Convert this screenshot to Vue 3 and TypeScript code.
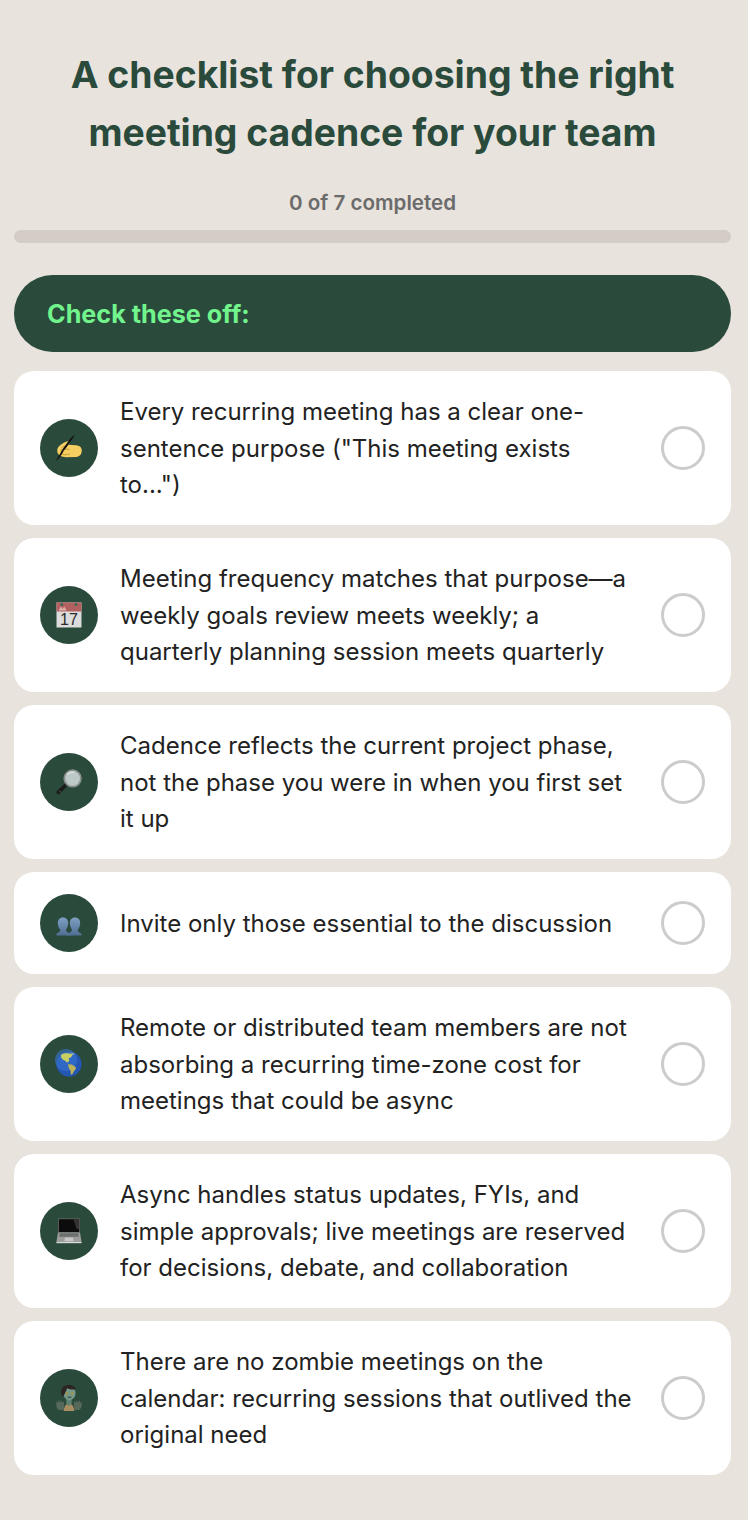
<template>
  <main class="page">
    <h1 class="title">A checklist for choosing the right meeting cadence for your team</h1>
    <p class="progress-label">{{ doneCount }} of {{ items.length }} completed</p>
    <div class="progress"></div>

    <div class="banner">Check these off:</div>

    <ul class="list">
      <li v-for="item in items" :key="item.icon" class="card">
        <span class="badge">
          <svg v-if="item.icon === 'hand'" viewBox="0 0 26 26" class="emoji">
            <path d="M1.2 14.6 C2 11.6 4.6 9.6 7 8.2 C9 7 11.6 5.6 12.8 6.4 C13.8 7.2 13.2 8.8 12.4 9.8 L20 10.2 C23.6 10.4 25.8 12.4 25.8 15.6 C25.8 19.4 23.6 21.8 20.4 22 L10 22.2 C6 22.2 2.6 20.4 1.4 17.6 Z" fill="#f6cf62" />
            <path d="M4 15.6 C6.6 13.8 10.4 13.6 13.6 14.6 M4.6 18.6 C7.6 20 11 20 14 18.8 M12.4 9.8 C9.8 10.2 7.2 11.4 5.4 13" fill="none" stroke="#bd8d30" stroke-width="0.8" />
            <path d="M17.4 0.4 L18.2 0.9 C14.6 6.4 11.4 11 8 15.4 L6.4 14.6 C9.6 9.6 13.4 4.8 17.4 0.4 Z" fill="#14120f" />
            <path d="M6.4 14.6 L8 15.4 L5 20.6 L0.8 25.4 L0.4 25 L3.6 19.6 Z" fill="#14120f" />
          </svg>

          <svg v-else-if="item.icon === 'calendar'" viewBox="0 0 26 26" class="emoji">
            <rect x="0.5" y="0.5" width="25" height="25" fill="#dcdcdc" />
            <rect x="0.5" y="0.5" width="25" height="9" fill="#b36060" />
            <circle cx="5.8" cy="2.4" r="1.5" fill="#3f6a58" />
            <circle cx="20" cy="2.4" r="1.5" fill="#3f6a58" />
            <path d="M2.5 8.6 L5 4.6 L6.6 7 L8.2 4.6 L10.6 8.6 Z" fill="#e0b0a8" />
            <text x="13" y="23.4" class="cal-num" text-anchor="middle">17</text>
          </svg>

          <svg v-else-if="item.icon === 'magnifier'" viewBox="0 0 26 26" class="emoji">
            <path d="M9.4 14.2 L11.8 16.6 L4.2 24.6 C3 25.6 1.4 25.2 0.8 24.2 C0.2 23 0.6 22 1.4 21.2 Z" fill="#1b1c1c" />
            <path d="M3 21.6 L5 23.6" stroke="#6f7372" stroke-width="0.8" />
            <circle cx="16.6" cy="9.4" r="9.2" fill="#8b8f8c" />
            <circle cx="16.6" cy="9.4" r="7.4" fill="#bcc9c6" />
            <path d="M11 6 C12.5 3.6 15.5 2.6 18.4 3.4" fill="none" stroke="#dfe7e5" stroke-width="1.2" />
          </svg>

          <svg v-else-if="item.icon === 'people'" viewBox="0 0 26 26" class="emoji">
            <defs>
              <linearGradient id="bust" x1="0" y1="0" x2="0" y2="1">
                <stop offset="0" stop-color="#7fa0c2" />
                <stop offset="1" stop-color="#4f6d93" />
              </linearGradient>
            </defs>
            <g transform="translate(0 6)">
              <path d="M7 1.5 C10.4 1.5 12.4 4 12.2 7.4 C12 10 11 12 10 13.5 C10 15 11 16 12.6 16.8 L15 18 L15 19.6 L0.4 19.6 L0.4 18 C1.4 17 3 16.4 4 15.6 C4.4 15 4.4 14.2 4 13.5 C3 12 2 10 1.8 7.4 C1.6 4 3.6 1.5 7 1.5 Z" fill="url(#bust)" />
              <path d="M19 1.5 C22.4 1.5 24.4 4 24.2 7.4 C24 10 23 12 22 13.5 C21.6 14.2 21.6 15 22 15.6 C23 16.4 24.6 17 25.6 18 L25.6 19.6 L11 19.6 L11 18 L13.4 16.8 C15 16 16 15 16 13.5 C15 12 14 10 13.8 7.4 C13.6 4 15.6 1.5 19 1.5 Z" fill="url(#bust)" />
            </g>
          </svg>

          <svg v-else-if="item.icon === 'globe'" viewBox="0 0 26 26" class="emoji">
            <circle cx="13" cy="13" r="12.6" fill="#2456b4" />
            <circle cx="10" cy="9" r="11" fill="#3a78d4" opacity="0.55" />
            <path d="M5.2 3.6 C8 2 11 1.8 13.4 2.6 L17 3.2 L14.8 6.4 L12.6 7.2 L13.4 9.8 L11 11.8 L9.6 10 L7 8.8 L5 6.4 Z" fill="#c7cf62" />
            <path d="M14 1.6 L18.8 2.6 L17.4 4 Z" fill="#8fa6b8" />
            <path d="M12 13.2 L15.6 13.4 L19.4 15.8 L20 17.4 L17.8 20.6 L16.6 23 L14.8 23.8 L14.6 20 L12.8 17 Z" fill="#bdb45a" />
          </svg>

          <svg v-else-if="item.icon === 'laptop'" viewBox="0 0 26 26" class="emoji">
            <rect x="2" y="0.4" width="22" height="14" rx="0.6" fill="#6b6e6c" />
            <rect x="2.8" y="1.2" width="20.4" height="12.8" fill="#0c0c0c" />
            <path d="M17.4 1.2 L23.2 1.2 L23.2 11 L20.6 11 Z" fill="#333" />
            <path d="M2 14.4 L24 14.4 L25.6 24 L0.4 24 Z" fill="#9c9e9c" />
            <rect x="3.4" y="15.2" width="19.2" height="3.6" fill="#6d6f6e" />
            <path d="M9 19.4 L17 19.4 L17.6 23.2 L8.4 23.2 Z" fill="#c6c7c6" />
            <rect x="0.4" y="24" width="25.2" height="1.2" fill="#dadada" />
          </svg>

          <svg v-else viewBox="0 0 26 26" class="emoji">
            <path d="M7.6 26 C8.2 21 10.5 18.6 13 18.6 C15.5 18.6 17.8 21 18.4 26 Z" fill="#a88e62" />
            <path d="M10.2 12 L15.8 12 L15.6 19 L13 21 L10.4 19 Z" fill="#5f8273" />
            <ellipse cx="13.4" cy="8" rx="6.2" ry="7" fill="#76998a" />
            <path d="M5.4 9.6 C3.8 3.6 7.6 0 12.6 0 C17 0 19.4 1.8 19.8 4.4 C16.8 4.9 13 4.3 11 3.3 C10.6 5.8 9 7.6 7.6 11.2 Z" fill="#2c2522" />
            <circle cx="11" cy="8.4" r="1.1" fill="#b8922c" />
            <circle cx="16.2" cy="8.4" r="1.1" fill="#b8922c" />
            <path d="M11.6 12.2 L15.4 12.2" stroke="#33413b" stroke-width="1.1" />
            <path d="M0.4 21 L0 16.6 L1.8 18.2 L2.2 15 L3.9 17.6 L5.2 15 L6 17.8 L8.2 16.2 L7.8 20 C9 21.6 8.4 24 7 25 L3 25 C1.4 24 0.6 22.6 0.4 21 Z" fill="#56695a" />
            <path d="M25.6 21 L26 16.6 L24.2 18.2 L23.8 15 L22.1 17.6 L20.8 15 L20 17.8 L17.8 16.2 L18.2 20 C17 21.6 17.6 24 19 25 L23 25 C24.6 24 25.4 22.6 25.6 21 Z" fill="#56695a" />
          </svg>
        </span>
        <span class="card__text">{{ item.text }}</span>
        <span class="check"></span>
      </li>
    </ul>
  </main>
</template>

<script setup lang="ts">
interface Item {
  icon: string
  text: string
}

const doneCount = 0

const items: Item[] = [
  { icon: 'hand', text: 'Every recurring meeting has a clear one-sentence purpose ("This meeting exists to...")' },
  { icon: 'calendar', text: 'Meeting frequency matches that purpose—a weekly goals review meets weekly; a quarterly planning session meets quarterly' },
  { icon: 'magnifier', text: 'Cadence reflects the current project phase, not the phase you were in when you first set it up' },
  { icon: 'people', text: 'Invite only those essential to the discussion' },
  { icon: 'globe', text: 'Remote or distributed team members are not absorbing a recurring time-zone cost for meetings that could be async' },
  { icon: 'laptop', text: 'Async handles status updates, FYIs, and simple approvals; live meetings are reserved for decisions, debate, and collaboration' },
  { icon: 'zombie', text: 'There are no zombie meetings on the calendar: recurring sessions that outlived the original need' }
]
</script>

<style>
body {
  background: #e8e3dd;
}
</style>

<style scoped>
.page {
  box-sizing: border-box;
  width: 748px;
  height: 1520px;
  padding: 46px 17px 45px 14px;
  background: #e8e3dd;
  font-family: Inter, "Liberation Sans", sans-serif;
}

.title {
  margin: 0 auto;
  width: 660px;
  font-size: 37.3px;
  line-height: 58px;
  font-weight: 700;
  text-align: center;
  color: #2a4a3c;
}

.progress-label {
  margin: 26px 0 0;
  font-size: 20.6px;
  line-height: 30px;
  font-weight: 600;
  text-align: center;
  color: #6b6b6b;
}

.progress {
  height: 13px;
  margin-top: 12px;
  border-radius: 7px;
  background: #d3cdc6;
}

.banner {
  margin-top: 32px;
  padding: 1px 33px 0;
  height: 76px;
  border-radius: 38.5px;
  background: #2a4a3c;
  color: #72f48c;
  font-size: 25.2px;
  line-height: 76px;
  font-weight: 700;
}

.list {
  display: flex;
  flex-direction: column;
  gap: 13px;
  margin: 19px 0 0;
  padding: 0;
  list-style: none;
}

.card {
  display: flex;
  align-items: center;
  gap: 22px;
  padding: 22px 26px;
  border-radius: 20px;
  background: #fff;
}

.badge {
  display: flex;
  flex: none;
  align-items: center;
  justify-content: center;
  width: 58px;
  height: 58px;
  border-radius: 50%;
  background: #2a4a3c;
}

.emoji {
  display: block;
  width: 26px;
  height: 26px;
  overflow: visible;
}

.cal-num {
  font-family: "Liberation Sans", sans-serif;
  font-size: 16px;
  fill: #2b2b2b;
}

.card__text {
  flex: 1;
  padding-top: 1px;
  margin-bottom: -1px;
  font-size: 24px;
  line-height: 36.667px;
  font-weight: 400;
  color: #222;
}

.check {
  flex: none;
  box-sizing: border-box;
  width: 44px;
  height: 44px;
  margin-left: 4px;
  border: 3px solid #ccc;
  border-radius: 50%;
}
</style>
